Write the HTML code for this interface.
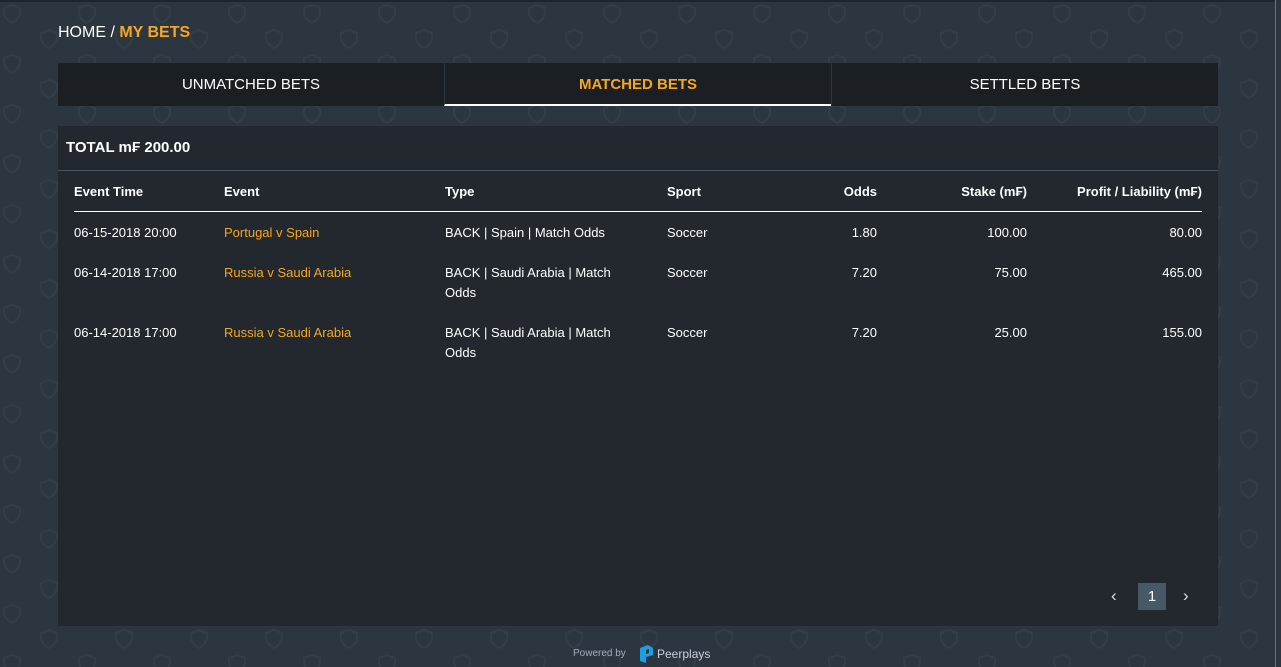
<!DOCTYPE html>
<html><head><meta charset="utf-8"><style>
*{margin:0;padding:0;box-sizing:border-box}
body{width:1281px;height:667px;overflow:hidden;background:#2c3640;font-family:"Liberation Sans",sans-serif;color:#fff;position:relative}
#bg{position:absolute;left:0;top:0}
.top{position:absolute;left:0;top:0;width:1281px;height:2px;background:#1e252b}
.sb{position:absolute;right:0;top:0;width:6px;height:667px;background:#2c3640;border-left:1px solid #6b747c}
.crumb{position:absolute;left:58px;top:24px;font-size:16px;color:#fff}
.crumb b{color:#f5a623}
.tabs{position:absolute;left:58px;top:63px;width:1160px;height:43px;background:#1b1f23;display:flex}
.tabs div{flex:1;text-align:center;line-height:44px;font-size:15px}
.tabs .a{color:#f5a623;font-weight:bold;border-bottom:2px solid #fff}
.tabs div+div{border-left:1px solid #2c3640}
.panel{position:absolute;left:58px;top:126px;width:1160px;height:500px;background:#22282e}
.total{position:absolute;left:8px;top:13px;font-size:15px;font-weight:bold}
.hr1{position:absolute;left:0;top:44px;width:1160px;height:1px;background:#4a5560}
table{position:absolute;left:16px;top:55px;width:1128px;border-collapse:collapse;font-size:13px;table-layout:fixed}
th{text-align:left;font-weight:bold;height:30px;border-bottom:1px solid #fff;vertical-align:top;padding-top:3px}
td{vertical-align:top;padding:11px 0 9px;line-height:20px;color:#fff}
td.t{padding-right:30px}
td.o{color:#f5a623}
.r{text-align:right}
.pg{position:absolute;left:1080px;top:457px;width:28px;height:27px;background:#475866;text-align:center;line-height:27px;font-size:15px}
.ar{position:absolute;top:460px;font-size:17px;color:#ddd}
.pw{position:absolute;left:573px;top:648px;font-size:10px;color:#aab}
.logo{position:absolute;left:638px;top:644px}
.pp{position:absolute;left:657px;top:647px;font-size:12px;color:#ccd}
</style></head><body>
<svg id="bg" width="1281" height="667"><defs><pattern id="p" width="75" height="50" patternUnits="userSpaceOnUse">
<g fill="none" stroke="#323d47" stroke-width="2"><path d="M4 8 L12 5 L20 8 L20 14 Q18 20 12 23 Q6 20 4 14Z"/><path d="M41 33 L49 30 L57 33 L57 39 Q55 45 49 48 Q43 45 41 39Z"/></g></pattern></defs>
<rect width="1281" height="667" fill="url(#p)"/></svg>
<div class="top"></div><div class="sb"></div>
<div class="crumb">HOME / <b>MY BETS</b></div>
<div class="tabs"><div>UNMATCHED BETS</div><div class="a">MATCHED BETS</div><div>SETTLED BETS</div></div>
<div class="panel">
<div class="total">TOTAL m₣ 200.00</div><div class="hr1"></div>
<table>
<colgroup><col style="width:150px"><col style="width:221px"><col style="width:222px"><col style="width:110px"><col style="width:100px"><col style="width:150px"><col></colgroup>
<tr><th>Event Time</th><th>Event</th><th>Type</th><th>Sport</th><th class="r">Odds</th><th class="r">Stake (m₣)</th><th class="r">Profit / Liability (m₣)</th></tr>
<tr><td>06-15-2018 20:00</td><td class="o">Portugal v Spain</td><td class="t">BACK | Spain | Match Odds</td><td>Soccer</td><td class="r">1.80</td><td class="r">100.00</td><td class="r">80.00</td></tr>
<tr><td>06-14-2018 17:00</td><td class="o">Russia v Saudi Arabia</td><td class="t">BACK | Saudi Arabia | Match Odds</td><td>Soccer</td><td class="r">7.20</td><td class="r">75.00</td><td class="r">465.00</td></tr>
<tr><td>06-14-2018 17:00</td><td class="o">Russia v Saudi Arabia</td><td class="t">BACK | Saudi Arabia | Match Odds</td><td>Soccer</td><td class="r">7.20</td><td class="r">25.00</td><td class="r">155.00</td></tr>
</table>
<div class="ar" style="left:1053px">‹</div><div class="pg">1</div><div class="ar" style="left:1125px">›</div>
</div>
<div class="pw">Powered by</div>
<svg class="logo" width="16" height="20"><path d="M2 4 L10 1 L15 4 L15 11 L8 13 L8 19 L2 17Z" fill="#1ea0e0"/><path d="M8 6 L11 5 L11 9 L8 10Z" fill="#2c3640"/></svg>
<div class="pp">Peerplays</div>
</body></html>
